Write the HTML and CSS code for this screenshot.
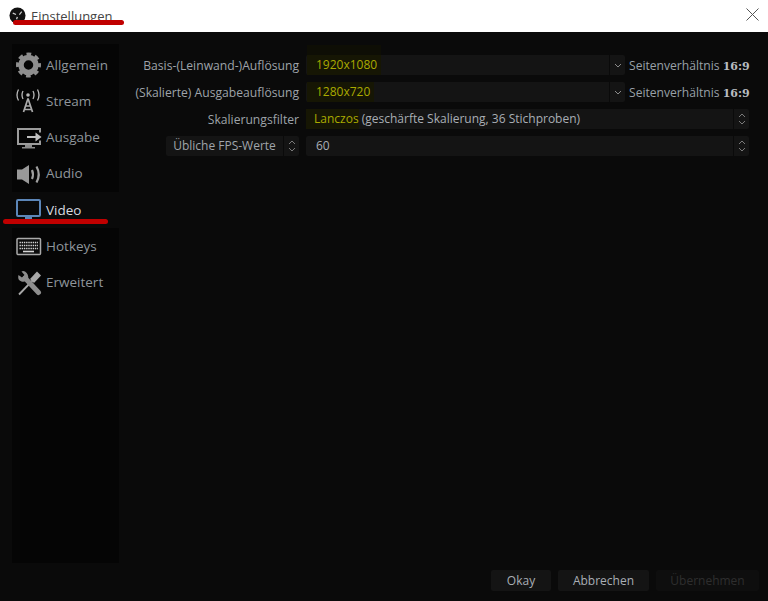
FILE: index.html
```html
<!DOCTYPE html>
<html lang="de">
<head>
<meta charset="utf-8">
<title>Einstellungen</title>
<link rel="stylesheet" href="styles.css">
</head>
<body>
<div class="window">
  <header class="titlebar">
    <svg class="logo" viewBox="0 0 18 18"><circle cx="9" cy="9" r="8.500" fill="#111"/><path d="M4 6.500 7.500 8M13.500 5 11 8M8 13 9 10" stroke="#d0d0d0" stroke-width="1.300" fill="none"/><circle cx="9" cy="9" r="1.500" fill="#111"/></svg>
    <span class="title">Einstellungen</span>
    <span class="mark mark-title"></span>
    <svg class="close" viewBox="0 0 13 13"><path d="M.5.5l12 12M12.500.5l-12 12" stroke="#555" stroke-width="1" fill="none"/></svg>
  </header>
  <main class="content">
    <div class="columns">
      <nav class="sidebar">
        <div class="nav-item">
          <svg class="icon" viewBox="0 0 28 28"><circle cx="13.500" cy="14" r="7.500" stroke="#8e8e8e" stroke-width="5.500" fill="none"/><circle cx="13.500" cy="14" r="10.500" stroke="#8e8e8e" stroke-width="4" stroke-dasharray="4.500 3.750" stroke-dashoffset="2.250" fill="none"/></svg>
          <span>Allgemein</span>
        </div>
        <div class="nav-item">
          <svg class="icon" viewBox="0 0 28 28"><circle cx="13" cy="8" r="1.800" fill="#b8b8b8"/><path d="M8 4q-2 4 0 8M18 4q2 4 0 8M3.500 2.500q-3 5.500 0 11M22.500 2.500q3 5.500 0 11" stroke="#b8b8b8" stroke-width="1.300" fill="none"/><path d="M13 11.500 8.500 25M13 11.500 17.500 25M10.500 19h5M9.500 22.500h7" stroke="#aaa" stroke-width="1.700" fill="none"/></svg>
          <span>Stream</span>
        </div>
        <div class="nav-item">
          <svg class="icon" viewBox="0 0 28 28"><path d="M25 9.500V6H3v15h22v-3.500" stroke="#9c9c9c" stroke-width="2" fill="none"/><path d="M12 14h11" stroke="#c0c0c0" stroke-width="2" fill="none"/><path d="M20.500 9.500l6 4.500-6 4.500z" fill="#c0c0c0"/><path d="M10 22h7v2h3v1.500H7V24h3z" fill="#8c8c8c"/></svg>
          <span>Ausgabe</span>
        </div>
        <div class="nav-item">
          <svg class="icon" viewBox="0 0 28 28"><path fill="#999" d="M2 10.500h5L14 6v19l-7-4.500H2z"/><path d="M17 11q2 4.500 0 9M21.500 7.500q4.500 8 0 16" stroke="#a0a0a0" stroke-width="2.200" fill="none"/></svg>
          <span>Audio</span>
        </div>
        <div class="nav-item nav-active">
          <svg class="icon" viewBox="0 0 28 28"><rect x="2" y="4" width="23" height="16" rx="1" fill="#0a0a0a" stroke="#5c86b8" stroke-width="2"/><path d="M10 21h7v2h-7z" fill="#5c86b8"/></svg>
          <span>Video</span>
          <span class="mark mark-nav"></span>
        </div>
        <div class="nav-item">
          <svg class="icon" viewBox="0 0 28 28"><rect x="2" y="6.500" width="23.500" height="16" rx="1" fill="#0c0c0c" stroke="#aaa" stroke-width="1.500"/><path d="M4.500 10.500h18.500M4.500 13.500h18.500M4.500 16.500h18.500" stroke="#d6d6d6" stroke-width="1.700" stroke-dasharray="1.400 .8"/><path d="M8 19.500h11" stroke="#d6d6d6" stroke-width="1.600"/></svg>
          <span>Hotkeys</span>
        </div>
        <div class="nav-item">
          <svg class="icon" viewBox="0 0 28 28"><path d="M24 5.500 17 13" stroke="#a8a8a8" stroke-width="5.500" fill="none"/><path d="M18 12 4 26.500" stroke="#a8a8a8" stroke-width="1.800" fill="none"/><path d="M10 10 23.500 24.500" stroke="#8e8e8e" stroke-width="5" stroke-linecap="round" fill="none"/><path d="M6.500 3.500 9.500 7l-2.500 2.500L3.500 7Q2 12 6.500 13.500 11 14.500 13 11 14 6 10 3.500 8 2.500 6.500 3.500z" fill="#8e8e8e"/></svg>
          <span>Erweitert</span>
        </div>
      </nav>
      <section class="form">
        <div class="row">
          <label class="label">Basis-(Leinwand-)Auflösung</label>
          <div class="combo combo-short"><span class="combo-text"><mark class="hl hl-tall">1920x1080</mark></span><span class="arrow"><svg viewBox="0 0 8 5"><path d="M1 1l3 3 3-3" stroke="#8a8a8a" fill="none"/></svg></span></div>
          <span class="ratio">Seitenverhältnis <b>16:9</b></span>
        </div>
        <div class="row">
          <label class="label">(Skalierte) Ausgabeauflösung</label>
          <div class="combo combo-short"><span class="combo-text"><mark class="hl">1280x720</mark></span><span class="arrow"><svg viewBox="0 0 8 5"><path d="M1 1l3 3 3-3" stroke="#8a8a8a" fill="none"/></svg></span></div>
          <span class="ratio">Seitenverhältnis <b>16:9</b></span>
        </div>
        <div class="row">
          <label class="label">Skalierungsfilter</label>
          <div class="combo"><span class="combo-text combo-tight"><mark class="hl hl-tight">Lanczos</mark> (geschärfte Skalierung, 36 Stichproben)</span><span class="spin"><svg viewBox="0 0 8 12"><path d="M1 4l3-3 3 3M1 8l3 3 3-3" stroke="#7a7a7a" fill="none"/></svg></span></div>
        </div>
        <div class="row">
          <div class="label-cell">
            <div class="fps-select"><span class="fps-text">Übliche FPS-Werte</span><span class="spin"><svg viewBox="0 0 8 12"><path d="M1 4l3-3 3 3M1 8l3 3 3-3" stroke="#7a7a7a" fill="none"/></svg></span></div>
          </div>
          <div class="combo"><span class="combo-text">60</span><span class="spin"><svg viewBox="0 0 8 12"><path d="M1 4l3-3 3 3M1 8l3 3 3-3" stroke="#7a7a7a" fill="none"/></svg></span></div>
        </div>
      </section>
    </div>
    <footer class="buttons">
      <button class="btn btn-okay">Okay</button>
      <button class="btn btn-cancel">Abbrechen</button>
      <button class="btn btn-apply">Übernehmen</button>
    </footer>
  </main>
</div>
</body>
</html>
```
FILE: styles.css
```css
* { box-sizing: border-box; }
html, body { margin: 0; height: 100%; }
body { background: #0a0a0a; font-family: "Open Sans", "Noto Sans", sans-serif; font-size: 12px; color: #a9aeb4; overflow: hidden; }
.window { width: 768px; height: 601px; display: flex; flex-direction: column; }
.titlebar { position: relative; height: 32px; background: #fff; display: flex; align-items: center; padding: 0 9px 1px; flex: none; }
.logo { width: 17px; height: 17px; flex: none; }
.title { margin-left: 5px; font-size: 13px; color: #444; }
.close { position: absolute; left: 746px; top: 8px; width: 13px; height: 13px; }
.mark { position: absolute; background: #c00000; border-radius: 3px; height: 5px; z-index: 2; }
.mark-title { left: 13px; top: 20px; width: 111px; }
.mark-nav { left: -9px; top: 27px; width: 105px; }
.content { flex: 1; display: flex; flex-direction: column; padding: 12px 8px 8px 12px; min-height: 0; }
.columns { height: 519px; display: flex; flex: none; }
.sidebar { width: 107px; background: #050505; padding-top: 3px; flex: none; }
.nav-item { position: relative; height: 36px; display: flex; align-items: center; padding-left: 3px; font-size: 13.500px; color: #8f959b; }
.nav-active { margin-top: 1px; background: #0a0a0a; color: #d8dce0; }
.icon { width: 28px; height: 28px; flex: none; margin-right: 3px; }
.form { flex: 1; padding-top: 11px; display: flex; flex-direction: column; gap: 7px; }
.row { display: flex; align-items: center; height: 20px; }
.label { width: 180px; text-align: right; margin-right: 7px; color: #9ea3a9; font-size: 12.150px; white-space: nowrap; flex: none; }
.label-cell { width: 180px; margin-right: 7px; display: flex; justify-content: flex-end; flex: none; }
.combo { height: 20px; width: 443px; background: #141414; border-radius: 2px; display: flex; flex: none; }
.combo-short { width: 319px; }
.combo-text { flex: 1; padding-left: 10px; line-height: 20px; color: #a9aeb4; font-size: 12px; white-space: nowrap; }
.combo-tight { padding-left: 8px; }
.hl { position: relative; color: #aaaa00; background: #161604; display: inline-block; margin-left: -9px; padding: 0 4px 0 9px; }
.hl-tight { margin-left: -8px; padding: 0 0 0 8px; }
.hl-tall::before { content: ""; position: absolute; left: 0; right: 0; top: -10px; height: 10px; background: #0e0e05; }
.arrow, .spin { width: 16px; display: flex; align-items: center; justify-content: center; border-left: 1px solid #0a0a0a; flex: none; }
.arrow svg { width: 8px; height: 5px; }
.spin svg { width: 8px; height: 12px; }
.ratio { margin-left: 4px; color: #98a0a8; font-size: 12.100px; white-space: nowrap; }
.ratio b { font-family: "DejaVu Serif", serif; font-size: 11px; color: #b8bcc0; }
.fps-select { width: 133px; height: 20px; background: #141414; border-radius: 2px; display: flex; }
.fps-text { flex: 1; text-align: center; line-height: 20px; font-size: 12px; white-space: nowrap; color: #a0a5ab; }
.buttons { display: flex; justify-content: flex-end; gap: 7px; margin-top: 7px; padding-right: 1px; }
.btn { height: 21px; padding: 0; border: 0; border-radius: 2px; background: #141414; color: #a9aeb4; font: 12px "Open Sans", "Noto Sans", sans-serif; }
.btn-okay { width: 60px; }
.btn-cancel { width: 91px; }
.btn-apply { width: 103px; background: #0e0e0e; color: #2e2e2e; }
```
